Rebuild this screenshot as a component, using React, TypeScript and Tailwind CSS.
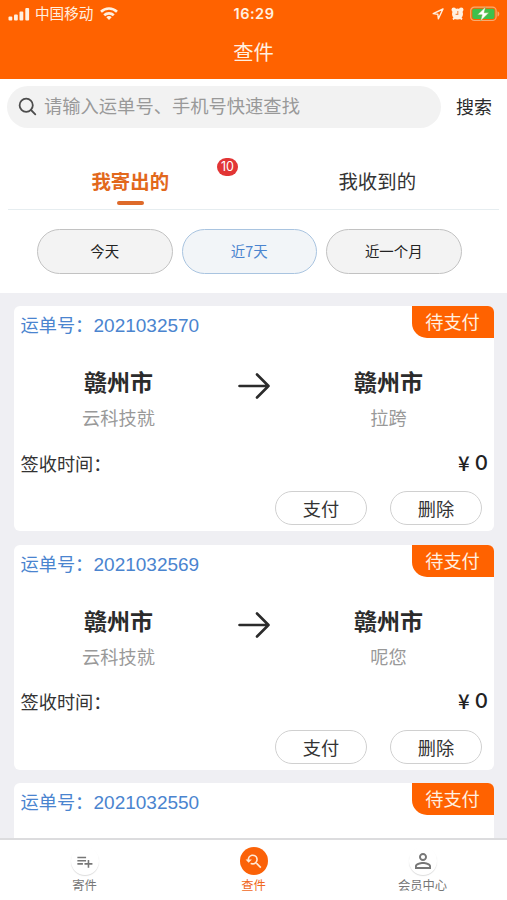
import clsx from 'clsx';
import { MdPersonOutline, MdPlaylistAdd, MdYoutubeSearchedFor } from 'react-icons/md';

interface Order {
  no: string;
  route?: { from: string; sender: string; to: string; receiver: string };
  price?: number;
}

const orders: Order[] = [
  { no: '2021032570', route: { from: '赣州市', sender: '云科技就', to: '赣州市', receiver: '拉跨' }, price: 0 },
  { no: '2021032569', route: { from: '赣州市', sender: '云科技就', to: '赣州市', receiver: '呢您' }, price: 0 },
  { no: '2021032550' },
];

const ranges = [
  { label: '今天', active: false },
  { label: '近7天', active: true },
  { label: '近一个月', active: false },
];

const navItems = [
  { label: '寄件', icon: MdPlaylistAdd, iconClass: 'h-[19px] w-[19px]', active: false },
  { label: '查件', icon: MdYoutubeSearchedFor, iconClass: 'h-[19px] w-[19px]', active: true },
  { label: '会员中心', icon: MdPersonOutline, iconClass: 'h-[24px] w-[24px]', active: false },
];

function StatusBar() {
  return (
    <div className="grid h-[27px] grid-cols-3 items-center pr-[7px] pl-[8px] text-[#fff0e0]">
      <div className="flex items-center">
        <svg width="22" height="14" viewBox="0 0 22 14" fill="currentColor">
          <rect x="0.5" y="9.5" width="3.8" height="4" rx="1" />
          <rect x="6" y="7.5" width="3.8" height="6" rx="1" />
          <rect x="11.5" y="4.5" width="3.8" height="9" rx="1" />
          <rect x="17.3" y="1" width="3.8" height="12.5" rx="1" />
        </svg>
        <span className="-mt-px ml-[5px] text-[14.6px] leading-[20px]">中国移动</span>
        <svg className="ml-[7px]" width="18" height="13" viewBox="0 0 18 13" fill="none" stroke="currentColor" strokeWidth="2.6">
          <path d="M1 4.7a11.5 11.5 0 0 1 16 0" />
          <path d="M4.2 8.3a7 7 0 0 1 9.6 0" />
          <path d="M9 13 6.3 10.3a3.8 3.8 0 0 1 5.4 0z" fill="currentColor" stroke="none" />
        </svg>
      </div>
      <span className="text-center font-['Inter','Liberation_Sans',sans-serif] text-[14.5px] leading-[20px] font-semibold tracking-[0.5px]">
        16:29
      </span>
      <div className="flex items-center justify-end">
        <svg width="12" height="12" viewBox="0 0 12 12" fill="none" stroke="currentColor" strokeWidth="1.4" strokeLinejoin="round">
          <path d="M11 1 1.2 5.6l4.6.6.6 4.6z" />
        </svg>
        <svg className="ml-[7px]" width="13" height="13" viewBox="0 0 13 13" fill="currentColor">
          <circle cx="2.8" cy="2.8" r="2.3" />
          <circle cx="10.2" cy="2.8" r="2.3" />
          <circle cx="6.5" cy="7" r="5.5" />
          <path d="m2 12.5 2-2M11 12.5l-2-2" stroke="currentColor" strokeWidth="1.8" />
          <path d="M6.8 4v3.4H4.6" fill="none" stroke="#f58a45" strokeWidth="1.1" />
        </svg>
        <svg className="ml-[6px]" width="30" height="16" viewBox="0 0 30 16">
          <rect x="0.7" y="1.2" width="25.4" height="13.3" rx="3.6" fill="none" stroke="#f9ab70" strokeWidth="1.2" />
          <rect x="2.3" y="2.8" width="22.2" height="10.1" rx="1.8" fill="#3fc04c" />
          <path d="M27.5 5.3c2.4.7 2.4 4.6 0 5.3z" fill="#f9ab70" />
          <path d="M15.500 1 7.500 8.800h4.700L10.500 15l8.300-8.200h-4.700z" fill="#fff" stroke="#7fae4a" strokeWidth="0.5" />
        </svg>
      </div>
    </div>
  );
}

function SearchBar() {
  return (
    <div className="flex h-[55px] items-center pl-[7px]">
      <div className="flex h-[42px] w-[434px] items-center rounded-full bg-[#f2f2f2] pl-[11px]">
        <svg width="19" height="19" viewBox="0 0 19 19" fill="none" stroke="#4d4d4d" strokeWidth="1.8" strokeLinecap="round">
          <circle cx="8.2" cy="8.2" r="6.6" />
          <path d="m13 13 4.3 4.3" />
        </svg>
        <span className="-mt-[2px] ml-[7px] text-[18.3px] text-[#999]">请输入运单号、手机号快速查找</span>
      </div>
      <span className="-mt-px ml-[15px] text-[18px] text-[#2a2a2a]">搜索</span>
    </div>
  );
}

function Tabs() {
  return (
    <div className="mx-[8px] grid h-[76px] grid-cols-2 border-b border-[#e6edf0] text-[19.4px] leading-[28px]">
      <div className="relative pt-[33px] pr-[1px] text-center font-bold text-[#e2681c]">
        我寄出的
        <span className="absolute top-[24px] left-[209px] flex h-[18px] w-[21px] items-center justify-center rounded-full bg-[#e23535] font-['Inter','Liberation_Sans',sans-serif] text-[12.5px] leading-[16px] font-normal text-white">
          10
        </span>
        <span className="absolute bottom-[4px] left-[109px] h-[4px] w-[27px] rounded-full bg-[#de6a2a]" />
      </div>
      <div className="pt-[33px] pl-[2px] text-center text-[#333]">我收到的</div>
    </div>
  );
}

function OrderCard({ order }: { order: Order }) {
  const { no, route, price } = order;

  return (
    <div className="h-[225px] shrink-0 overflow-hidden rounded-[6px] bg-white">
      <div className="flex h-[32px] justify-between">
        <div className="flex pl-[6.5px] leading-[37px] text-[#4a84cf]">
          <span className="w-[73px] text-[18.2px]">运单号：</span>
          <span className="font-['Liberation_Sans',sans-serif] text-[19px] leading-[39px]">{no}</span>
        </div>
        <span className="w-[82px] rounded-bl-[15px] bg-[#ff6200] pr-px text-center text-[18.2px] leading-[31px] text-[#fff0e0]">
          待支付
        </span>
      </div>

      {route && (
        <>
          <div className="grid h-[98px] grid-cols-[209px_61px_209px] pt-[25px] text-center">
            <div>
              <p className="text-[23px] leading-[36px] font-bold text-[#2b2b2b]">{route.from}</p>
              <p className="pt-px text-[18.2px] leading-[34px] text-[#999]">{route.sender}</p>
            </div>
            <svg className="mt-[10px] ml-[15px]" width="32" height="26" viewBox="0 0 32 26" fill="none" stroke="#2b2b2b" strokeWidth="2.6" strokeLinecap="round" strokeLinejoin="round">
              <path d="M1.5 13h29M19 1.500 30.500 13 19 24.500" />
            </svg>
            <div>
              <p className="text-[23px] leading-[36px] font-bold text-[#2b2b2b]">{route.to}</p>
              <p className="pt-px text-[18.2px] leading-[34px] text-[#999]">{route.receiver}</p>
            </div>
          </div>

          <div className="flex h-[55px] items-center justify-between pr-[6px] pl-[6.5px]">
            <span className="text-[18.2px] text-[#333]">签收时间：</span>
            <span className="-mt-[3px] flex items-center gap-[5px] text-[20.5px] font-medium text-[#222]">
              ¥
              <span className="mt-[2px] font-['Inter','Liberation_Sans',sans-serif]">{price}</span>
            </span>
          </div>

          <div className="flex justify-end gap-[23px] pr-[12px] text-[18.2px] text-[#333]">
            <button className="h-[34px] w-[92px] rounded-full border border-[#d0d0d0] leading-[28px]">支付</button>
            <button className="h-[34px] w-[92px] rounded-full border border-[#d0d0d0] leading-[28px]">删除</button>
          </div>
        </>
      )}
    </div>
  );
}

function BottomNav() {
  return (
    <div className="grid h-[62px] shrink-0 grid-cols-3 border-t-2 border-[#dcdcde] bg-white">
      {navItems.map(({ label, icon: Icon, iconClass, active }) => (
        <div key={label} className={clsx('flex flex-col items-center pt-[7px]', active ? 'text-[#f0681c]' : 'text-[#777]')}>
          <div
            className={clsx(
              'flex h-[28px] w-[28px] items-center justify-center rounded-full',
              active ? 'bg-[#fb6208] text-[#ffe9d6]' : 'shadow-[0_1px_1px_#ddd]'
            )}
          >
            <Icon className={iconClass} />
          </div>
          <span className="text-[12.3px] leading-[20px]">{label}</span>
        </div>
      ))}
    </div>
  );
}

export default function App() {
  return (
    <div className="flex h-[900px] w-[507px] flex-col overflow-hidden bg-[#efeff3] font-['Noto_Sans_CJK_SC',sans-serif]">
      <header className="h-[79px] shrink-0 bg-[#ff6200]">
        <StatusBar />
        <h1 className="text-center text-[20.3px] leading-[48px] text-[#fff0e0]">查件</h1>
      </header>

      <div className="h-[214px] shrink-0 bg-white">
        <SearchBar />
        <Tabs />
        <div className="flex gap-[9px] pt-[19px] pl-[37px]">
          {ranges.map(({ label, active }) => (
            <button
              key={label}
              className={clsx(
                'h-[45px] w-[135.5px] rounded-full border pb-px text-[14.4px]',
                active ? 'border-[#a9c4e0] bg-[#f2f5f8] text-[#4a84cf]' : 'border-[#c2c2c2] bg-[#f3f3f3] text-[#222]'
              )}
            >
              {label}
            </button>
          ))}
        </div>
      </div>

      <main className="flex min-h-0 flex-1 flex-col gap-[13.5px] overflow-hidden pt-[13px] pr-[13px] pl-[14px]">
        {orders.map((order) => (
          <OrderCard key={order.no} order={order} />
        ))}
      </main>

      <BottomNav />
    </div>
  );
}
